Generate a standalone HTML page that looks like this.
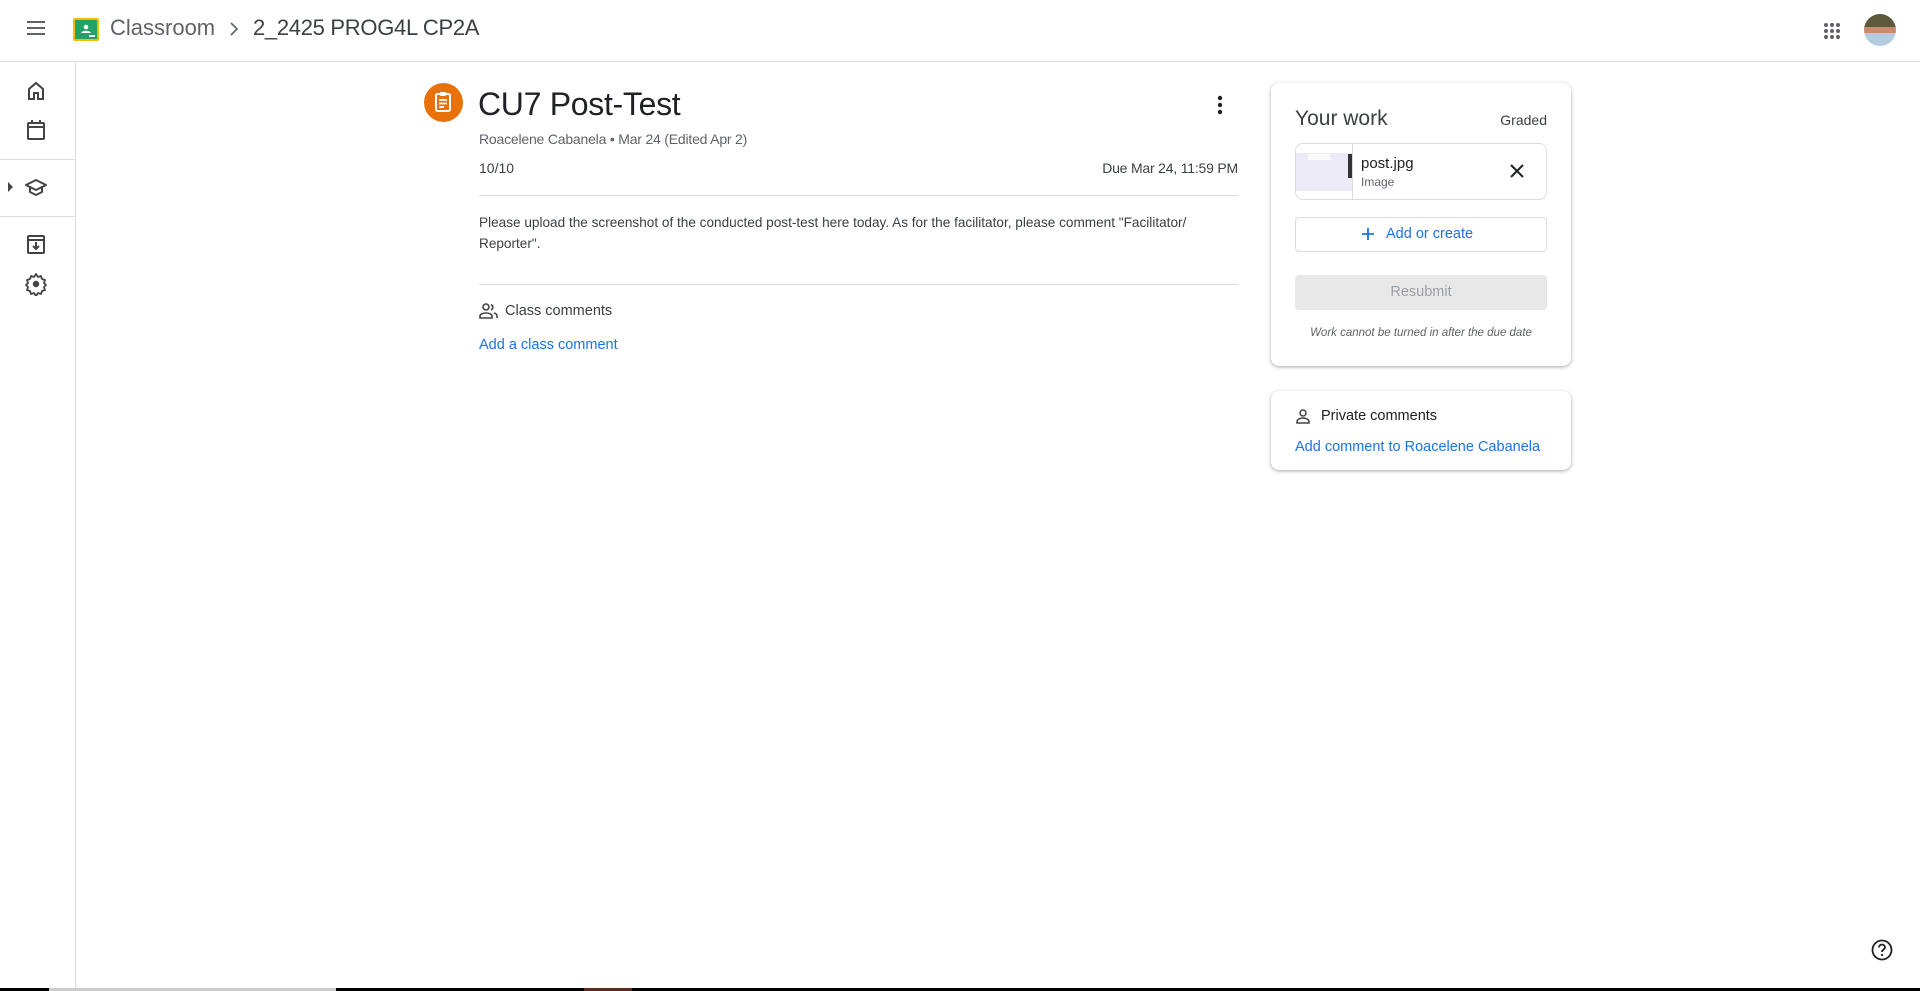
<!DOCTYPE html>
<html><head><meta charset="utf-8"><style>
*{margin:0;padding:0;box-sizing:border-box}
body{width:1920px;height:991px;overflow:hidden;background:#fff;font-family:"Liberation Sans",Arial,sans-serif;color:#3c4043;position:relative}
.a{position:absolute}
.hdr{left:0;top:0;width:1920px;height:62px;border-bottom:1px solid #dadce0}
.side{left:0;top:62px;width:76px;height:926px;border-right:1px solid #dadce0}
.hr{height:1px;background:#dadce0}
.blue{color:#1a73e8}
.card{background:#fff;border-radius:8px;box-shadow:0 1px 2px rgba(60,64,67,.3),0 1px 4px 1px rgba(60,64,67,.15)}
</style></head><body>
<div class="a hdr"></div>
<svg class="a" style="left:24px;top:16px" width="24" height="24" viewBox="0 0 24 24"><path d="M3 6h18M3 12h18M3 18h18" stroke="#5f6368" stroke-width="2"/></svg>
<svg class="a" style="left:73px;top:18px" width="26" height="23" viewBox="0 0 26 23"><rect x="0" y="0" width="26" height="23" rx="2" fill="#f9ba00"/><rect x="2" y="2" width="22" height="19" fill="#21a366"/><circle cx="13" cy="9" r="2.3" fill="#fff"/><path d="M8 15c1-3 9-3 10 0z" fill="#fff"/><rect x="16" y="17" width="6" height="2" fill="#fff"/></svg>
<div class="a" style="left:110px;top:15px;font-size:22px;color:#5f6368">Classroom</div>
<svg class="a" style="left:226px;top:20px" width="16" height="18" viewBox="0 0 16 18"><path d="M5 3l6 6-6 6" fill="none" stroke="#5f6368" stroke-width="1.6"/></svg>
<div class="a" style="left:253px;top:15px;font-size:22px;color:#3c4043;letter-spacing:-0.3px">2_2425 PROG4L CP2A</div>
<svg class="a" style="left:1823px;top:22px" width="18" height="18" viewBox="0 0 18 18" fill="#5f6368"><circle cx="3" cy="3" r="2"/><circle cx="9" cy="3" r="2"/><circle cx="15" cy="3" r="2"/><circle cx="3" cy="9" r="2"/><circle cx="9" cy="9" r="2"/><circle cx="15" cy="9" r="2"/><circle cx="3" cy="15" r="2"/><circle cx="9" cy="15" r="2"/><circle cx="15" cy="15" r="2"/></svg>
<div class="a" style="left:1864px;top:14px;width:32px;height:32px;border-radius:50%;background:linear-gradient(#5b5a3c 0 40%,#c98a70 40% 60%,#b7cbe0 60%)"></div>

<div class="a side"></div>
<svg class="a" style="left:24px;top:79px" width="24" height="24" viewBox="0 0 24 24"><path d="M5 20V10l7-6 7 6v10h-5v-6h-4v6z" fill="none" stroke="#444" stroke-width="2"/></svg>
<svg class="a" style="left:24px;top:118px" width="24" height="24" viewBox="0 0 24 24"><rect x="4" y="5" width="16" height="16" rx="1" fill="none" stroke="#444" stroke-width="2"/><path d="M4 9h16M8 2v4M16 2v4" stroke="#444" stroke-width="2"/></svg>
<div class="a hr" style="left:0;top:159px;width:76px"></div>
<svg class="a" style="left:8px;top:182px" width="6" height="10" viewBox="0 0 6 10"><path d="M0 0l5 5-5 5z" fill="#444"/></svg>
<svg class="a" style="left:24px;top:175px" width="24" height="24" viewBox="0 0 24 24"><path d="M2 10l10-5 10 5-10 5z M6 12v5l6 3 6-3v-5" fill="none" stroke="#444" stroke-width="2" stroke-linejoin="round"/></svg>
<div class="a hr" style="left:0;top:216px;width:76px"></div>
<svg class="a" style="left:24px;top:232px" width="24" height="24" viewBox="0 0 24 24"><rect x="4" y="4" width="16" height="17" rx="1" fill="none" stroke="#444" stroke-width="2"/><path d="M4 8h16M12 10v7M9 14l3 3 3-3" fill="none" stroke="#444" stroke-width="2"/></svg>
<svg class="a" style="left:24px;top:272px" width="24" height="24" viewBox="0 0 24 24"><path d="M12 2l2 3 3-1 1 3 3 1-1 3 2 2-2 2 1 3-3 1-1 3-3-1-2 3-2-3-3 1-1-3-3-1 1-3-2-2 2-2-1-3 3-1 1-3 3 1z" fill="none" stroke="#444" stroke-width="1.8" stroke-linejoin="round"/><circle cx="12" cy="12" r="3.2" fill="#444"/></svg>

<div class="a" style="left:424px;top:83px;width:39px;height:39px;border-radius:50%;background:#e8710a"></div>
<svg class="a" style="left:433px;top:91px" width="20" height="22" viewBox="0 0 20 22"><rect x="3" y="3" width="14" height="17" rx="1.5" fill="none" stroke="#fff" stroke-width="2"/><rect x="7" y="1" width="6" height="4" rx="1" fill="#fff"/><path d="M6 9h8M6 12.5h8M6 16h5" stroke="#fff" stroke-width="1.8"/></svg>
<div class="a" style="left:478px;top:86px;font-size:32px;color:#202124;letter-spacing:-0.3px">CU7 Post-Test</div>
<svg class="a" style="left:1210px;top:94px" width="20" height="22" viewBox="0 0 20 22" fill="#202124"><circle cx="10" cy="4" r="2.2"/><circle cx="10" cy="11" r="2.2"/><circle cx="10" cy="18" r="2.2"/></svg>
<div class="a" style="left:479px;top:131px;font-size:14px;color:#5f6368;letter-spacing:-0.2px">Roacelene Cabanela • Mar 24 (Edited Apr 2)</div>
<div class="a" style="left:479px;top:160px;font-size:14px;color:#3c4043">10/10</div>
<div class="a" style="left:1050px;top:160px;width:188px;text-align:right;font-size:14px;color:#3c4043;letter-spacing:-0.2px">Due Mar 24, 11:59 PM</div>
<div class="a hr" style="left:479px;top:195px;width:759px"></div>
<div class="a" style="left:479px;top:212px;width:762px;font-size:13.6px;line-height:21px;color:#3c4043">Please upload the screenshot of the conducted post-test here today. As for the facilitator, please comment "Facilitator/ Reporter".</div>
<div class="a hr" style="left:479px;top:284px;width:759px"></div>
<svg class="a" style="left:479px;top:302px" width="20" height="18" viewBox="0 0 20 18"><circle cx="7" cy="5" r="3" fill="none" stroke="#444" stroke-width="1.6"/><path d="M1 16v-2c0-2 3-3 6-3s6 1 6 3v2z" fill="none" stroke="#444" stroke-width="1.6"/><path d="M12 2.5a3 3 0 010 5.5M15 11c2 .5 3 1.5 3 3v2" fill="none" stroke="#444" stroke-width="1.6"/></svg>
<div class="a" style="left:505px;top:303px;font-size:14.5px;color:#3c4043">Class comments</div>
<div class="a blue" style="left:479px;top:337px;font-size:14.5px">Add a class comment</div>

<div class="a card" style="left:1271px;top:83px;width:300px;height:283px"></div>
<div class="a" style="left:1295px;top:107px;font-size:21px;color:#3c4043">Your work</div>
<div class="a" style="left:1480px;top:112px;width:67px;text-align:right;font-size:14px;color:#3c4043">Graded</div>
<div class="a" style="left:1295px;top:143px;width:252px;height:57px;border:1px solid #dadce0;border-radius:8px;overflow:hidden">
 <div class="a" style="left:0;top:0;width:57px;height:56px;border-right:1px solid #dadce0;background:#fff"><div class="a" style="left:0;top:9px;width:56px;height:38px;background:#eceaf6"></div><div class="a" style="left:12px;top:10px;width:22px;height:6px;background:#fafafa"></div><div class="a" style="left:52px;top:10px;width:4px;height:24px;background:#333"></div></div>
</div>
<div class="a" style="left:1361px;top:155px;font-size:15px;color:#202124">post.jpg</div>
<div class="a" style="left:1361px;top:175px;font-size:12px;color:#5f6368">Image</div>
<svg class="a" style="left:1509px;top:163px" width="16" height="16" viewBox="0 0 16 16"><path d="M2 2l12 12M14 2L2 14" stroke="#202124" stroke-width="2"/></svg>
<div class="a" style="left:1295px;top:217px;width:252px;height:35px;border:1px solid #dadce0;border-radius:4px"></div>
<svg class="a" style="left:1361px;top:227px" width="14" height="14" viewBox="0 0 14 14"><path d="M7 1v12M1 7h12" stroke="#1a73e8" stroke-width="1.8"/></svg>
<div class="a blue" style="left:1386px;top:226px;font-size:14.5px">Add or create</div>
<div class="a" style="left:1295px;top:275px;width:252px;height:35px;background:#e8e8e8;border-radius:4px;text-align:center;line-height:35px;font-size:14.5px;color:#9aa0a6">Resubmit</div>
<div class="a" style="left:1295px;top:327px;width:252px;text-align:center;font-size:11.5px;font-style:italic;color:#5f6368">Work cannot be turned in after the due date</div>

<div class="a card" style="left:1271px;top:391px;width:300px;height:79px"></div>
<svg class="a" style="left:1296px;top:409px" width="14" height="15" viewBox="0 0 14 15"><circle cx="7" cy="4" r="3" fill="none" stroke="#444" stroke-width="1.5"/><path d="M1 14v-1.5c0-2 3-3.5 6-3.5s6 1.5 6 3.5V14z" fill="none" stroke="#444" stroke-width="1.5"/></svg>
<div class="a" style="left:1321px;top:408px;font-size:14.5px;color:#202124">Private comments</div>
<div class="a blue" style="left:1295px;top:439px;font-size:14.5px">Add comment to Roacelene Cabanela</div>

<svg class="a" style="left:1871px;top:939px" width="22" height="22" viewBox="0 0 22 22"><circle cx="11" cy="11" r="9.5" fill="none" stroke="#202124" stroke-width="1.8"/><path d="M8 8.5a3 3 0 016 0c0 2-3 2-3 4.5" fill="none" stroke="#202124" stroke-width="1.8"/><circle cx="11" cy="16" r="1.1" fill="#202124"/></svg>

<div class="a" style="left:0;top:988px;width:1920px;height:3px;background:#000"></div>
<div class="a" style="left:49px;top:988px;width:287px;height:3px;background:#ccc"></div>
<div class="a" style="left:584px;top:988px;width:48px;height:3px;background:#5a2a20"></div>
</body></html>
